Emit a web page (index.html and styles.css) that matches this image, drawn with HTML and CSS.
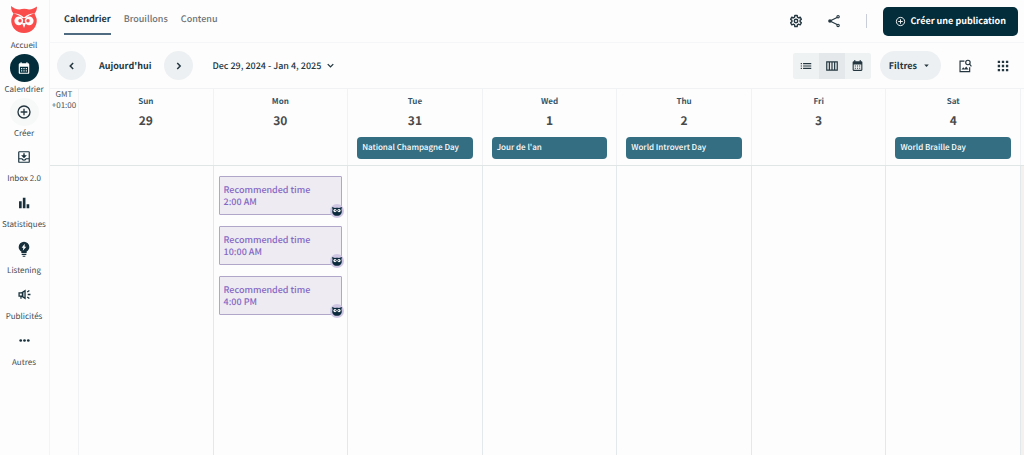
FILE: index.html
```html
<!DOCTYPE html>
<html lang="fr">
<head>
<meta charset="utf-8">
<title>Calendrier</title>
<meta name="viewport" content="width=device-width, initial-scale=1">
<link rel="stylesheet" href="styles.css">
</head>
<body>
<svg class="defs" aria-hidden="true">
  <symbol id="plus-circle" viewBox="0 0 24 24"><circle cx="12" cy="12" r="9" fill="none" stroke="currentColor" stroke-width="2"/><path d="M12 7v10M7 12h10" fill="none" stroke="currentColor" stroke-width="2"/></symbol>
  <symbol id="calendar" viewBox="0 0 24 24"><path fill="currentColor" fill-rule="evenodd" d="M19 4h-1V2h-2v2H8V2H6v2H5a2 2 0 0 0-2 2v14a2 2 0 0 0 2 2h14a2 2 0 0 0 2-2V6a2 2 0 0 0-2-2zM5 10h14v10H5zM7 12v2h2v-2zM11 12v2h2v-2zM15 12v2h2v-2zM7 16v2h2v-2zM11 16v2h2v-2zM15 16v2h2v-2z"/></symbol>
  <symbol id="owl" viewBox="0 0 14 14"><circle cx="7" cy="7" r="7" fill="#cfc6e4"/><path fill="#0b2a3b" d="M2 3 5 4c1.300-.4 2.700-.4 4 0l3-1-.6 2.400c1.300 3.400-.8 6.400-4.400 6.400S1.300 8.800 2.600 5.400z"/><circle cx="5" cy="6.600" r="1.600" fill="#fff"/><circle cx="9" cy="6.600" r="1.600" fill="#fff"/><circle cx="5.300" cy="6.600" r=".6" fill="#0b2a3b"/><circle cx="8.700" cy="6.600" r=".6" fill="#0b2a3b"/></symbol>
</svg>
<div class="app">
  <nav class="sidebar" aria-label="Navigation">
    <a class="home" href="#">
      <svg class="home__logo" viewBox="0 0 28 28" aria-hidden="true"><path fill="#fb4c4c" d="M1 0c2.200 2 5.200 3.300 8.500 3.500 3-1 6.500-1 9.500 0C22 3.300 25 2 27 .5c0 3-.8 5.300-2.500 7 .8 1.800 1.600 3.600 2.200 5.500.8 8-5 14-12.700 14S.5 21 1.300 13c.6-1.900 1.400-3.700 2.200-5.500C1.800 5.500 1 3 1 0z"/><path fill="#fdfdfd" d="M3.500 7.500c3.500-.3 7.500.8 10.500 4 3-3.200 7-4.300 10.500-4-3.600.7-6.500 2.200-8.500 4.500h-4C10 9.700 7.100 8.200 3.500 7.500z"/><circle cx="8.800" cy="14.800" r="4.400" fill="#fdfdfd"/><circle cx="19.200" cy="14.800" r="4.400" fill="#fdfdfd"/><path fill="#fdfdfd" d="M12 17h4l-2 5z"/><circle cx="10" cy="14.800" r="1.700" fill="#fb4c4c"/><circle cx="18" cy="14.800" r="1.700" fill="#fb4c4c"/></svg>
      <span class="nav-label">Accueil</span>
    </a>
    <a class="nav-item nav-item--round" href="#" aria-current="page">
      <span class="nav-icon nav-icon--active"><svg class="icon-14" aria-hidden="true"><use href="#calendar"/></svg></span>
      <span class="nav-label">Calendrier</span>
    </a>
    <a class="nav-item nav-item--round" href="#">
      <span class="nav-icon nav-icon--soft"><svg class="icon-16" aria-hidden="true"><use href="#plus-circle"/></svg></span>
      <span class="nav-label">Créer</span>
    </a>
    <a class="nav-item" href="#">
      <span class="nav-icon"><svg class="icon-14" viewBox="0 0 24 24" aria-hidden="true"><path fill="none" stroke="currentColor" stroke-width="2" d="M4 3h16a1 1 0 0 1 1 1v16a1 1 0 0 1-1 1H4a1 1 0 0 1-1-1V4a1 1 0 0 1 1-1zM3 15h5.500c.8 3 6.200 3 7 0H21"/><path fill="currentColor" d="M10.800 5.500h2.400V9H17l-5 5-5-5h3.800z"/></svg></span>
      <span class="nav-label">Inbox 2.0</span>
    </a>
    <a class="nav-item" href="#">
      <span class="nav-icon"><svg class="icon-14" viewBox="0 0 24 24" aria-hidden="true"><path fill="currentColor" d="M3.500 9H8v12H3.500zM10 3h4.500v18H10zM16.500 14H21v7h-4.500z"/></svg></span>
      <span class="nav-label">Statistiques</span>
    </a>
    <a class="nav-item" href="#">
      <span class="nav-icon"><svg class="icon-16" viewBox="0 0 24 24" aria-hidden="true"><path fill="currentColor" fill-rule="evenodd" d="M12 1a8 8 0 0 0-8 8c0 3 1.500 5.200 4 6.700V18h8v-2.300c2.500-1.500 4-3.700 4-6.700a8 8 0 0 0-8-8zm1 3-4.500 6H11l-.8 4.500L15.500 8.500H13zM8.500 19h7v2h-7zM10 22h4v1.500h-4z"/></svg></span>
      <span class="nav-label">Listening</span>
    </a>
    <a class="nav-item" href="#">
      <span class="nav-icon"><svg class="icon-13" viewBox="0 0 24 24" aria-hidden="true"><path fill="none" stroke="currentColor" stroke-width="2.400" d="M2 9h5l6-4v14l-6-4H2zM5.500 15v5M18 12h5M17 7.500l4-3M17 16.500l4 3"/><path fill="currentColor" d="M7 8h3v8H7z"/></svg></span>
      <span class="nav-label">Publicités</span>
    </a>
    <a class="nav-item" href="#">
      <span class="nav-icon"><svg class="icon-13" viewBox="0 0 24 24" aria-hidden="true"><g fill="currentColor"><circle cx="5" cy="12" r="2.500"/><circle cx="12" cy="12" r="2.500"/><circle cx="19" cy="12" r="2.500"/></g></svg></span>
      <span class="nav-label">Autres</span>
    </a>
  </nav>

  <main class="main">
    <header class="topbar">
      <nav class="tabs" aria-label="Vues">
        <a class="tab tab--active" href="#">Calendrier</a>
        <a class="tab" href="#">Brouillons</a>
        <a class="tab" href="#">Contenu</a>
      </nav>
      <div class="topbar__actions">
        <button class="icon-button" type="button" aria-label="Paramètres"><svg class="icon-14" viewBox="0 0 24 24" aria-hidden="true"><path fill="none" stroke="currentColor" stroke-width="2.400" stroke-linejoin="round" d="M10 2.500h4l.5 2.900 1.900 1.100 2.800-1 2 3.500-2.200 1.900v2.200l2.200 1.900-2 3.500-2.800-1-1.900 1.100-.5 2.900h-4l-.5-2.900-1.900-1.100-2.800 1-2-3.500L5 13.100v-2.200L2.800 9l2-3.500 2.800 1 1.900-1.100z"/><circle cx="12" cy="12" r="3" fill="none" stroke="currentColor" stroke-width="2.400"/></svg></button>
        <button class="icon-button" type="button" aria-label="Partager"><svg class="icon-14" viewBox="0 0 24 24" aria-hidden="true"><path fill="none" stroke="currentColor" stroke-width="2" d="M19 5 5 12l14 7"/><g fill="#fdfdfd" stroke="currentColor" stroke-width="2"><circle cx="19" cy="4.500" r="2"/><circle cx="19" cy="19.500" r="2"/></g><circle cx="5" cy="12" r="3" fill="currentColor"/></svg></button>
        <span class="divider"></span>
        <button class="create" type="button"><svg class="icon-11" aria-hidden="true"><use href="#plus-circle"/></svg>Créer une publication</button>
      </div>
    </header>

    <div class="toolbar">
      <button class="round-button" type="button" aria-label="Semaine précédente"><svg class="icon-14" viewBox="0 0 24 24" aria-hidden="true"><path fill="none" stroke="currentColor" stroke-width="2.600" d="m14 7-5 5 5 5"/></svg></button>
      <button class="today" type="button">Aujourd'hui</button>
      <button class="round-button" type="button" aria-label="Semaine suivante"><svg class="icon-14" viewBox="0 0 24 24" aria-hidden="true"><path fill="none" stroke="currentColor" stroke-width="2.600" d="m9 7 5 5-5 5"/></svg></button>
      <button class="range" type="button">Dec 29, 2024 - Jan 4, 2025<svg class="icon-11" viewBox="0 0 24 24" aria-hidden="true"><path fill="none" stroke="currentColor" stroke-width="3" d="m6 9 6 6 6-6"/></svg></button>
      <div class="toolbar__right">
        <div class="views">
          <button class="view" type="button" aria-label="Liste"><svg class="icon-14" viewBox="0 0 24 24" aria-hidden="true"><path fill="currentColor" d="M3 7h2v2H3zM7 7h14v2H7zM3 11h2v2H3zM7 11h14v2H7zM3 15h2v2H3zM7 15h14v2H7z"/></svg></button>
          <button class="view view--active" type="button" aria-label="Semaine"><svg class="icon-14" viewBox="0 0 24 24" aria-hidden="true"><path fill="none" stroke="currentColor" stroke-width="2" d="M3 5h18v14H3zM7.500 5v14M12 5v14M16.500 5v14"/></svg></button>
          <button class="view" type="button" aria-label="Mois"><svg class="icon-13" aria-hidden="true"><use href="#calendar"/></svg></button>
        </div>
        <button class="filters" type="button">Filtres<svg class="icon-11" viewBox="0 0 24 24" aria-hidden="true"><path fill="currentColor" d="M7 10h10l-5 5z"/></svg></button>
        <div class="tools">
          <button class="icon-button" type="button" aria-label="Recherche d'images"><svg class="icon-14" viewBox="0 0 24 24" aria-hidden="true"><path fill="none" stroke="currentColor" stroke-width="2" d="M11 3.500H3.500v18H20V14"/><circle cx="17" cy="6" r="3.800" fill="none" stroke="currentColor" stroke-width="2"/><path fill="none" stroke="currentColor" stroke-width="2" d="m19.500 8.500 3.500 4"/><path fill="currentColor" d="m6 18 3-4 2.200 2.500L14 13l4 5z"/></svg></button>
          <button class="icon-button" type="button" aria-label="Applications"><svg class="icon-14" viewBox="0 0 24 24" aria-hidden="true"><path fill="currentColor" d="M3 3h4v4H3zM10 3h4v4h-4zM17 3h4v4h-4zM3 10h4v4H3zM10 10h4v4h-4zM17 10h4v4h-4zM3 17h4v4H3zM10 17h4v4h-4zM17 17h4v4h-4z"/></svg></button>
        </div>
      </div>
    </div>

    <section class="calendar" aria-label="Semaine">
      <div class="week week--head">
        <div class="zone">GMT<br>+01:00</div>
        <div class="day"><span class="day__name">Sun</span><span class="day__number">29</span></div>
        <div class="day"><span class="day__name">Mon</span><span class="day__number">30</span></div>
        <div class="day"><span class="day__name">Tue</span><span class="day__number">31</span><a class="event" href="#">National Champagne Day</a></div>
        <div class="day"><span class="day__name">Wed</span><span class="day__number">1</span><a class="event" href="#">Jour de l'an</a></div>
        <div class="day"><span class="day__name">Thu</span><span class="day__number">2</span><a class="event" href="#">World Introvert Day</a></div>
        <div class="day"><span class="day__name">Fri</span><span class="day__number">3</span></div>
        <div class="day"><span class="day__name">Sat</span><span class="day__number">4</span><a class="event" href="#">World Braille Day</a></div>
        <div class="edge"></div>
      </div>
      <div class="week week--body">
        <div class="slot"></div>
        <div class="slot"></div>
        <div class="slot">
          <a class="suggestion" href="#">Recommended time<br>2:00 AM<svg class="suggestion__owl" aria-hidden="true"><use href="#owl"/></svg></a>
          <a class="suggestion" href="#">Recommended time<br>10:00 AM<svg class="suggestion__owl" aria-hidden="true"><use href="#owl"/></svg></a>
          <a class="suggestion" href="#">Recommended time<br>4:00 PM<svg class="suggestion__owl" aria-hidden="true"><use href="#owl"/></svg></a>
        </div>
        <div class="slot"></div>
        <div class="slot"></div>
        <div class="slot"></div>
        <div class="slot"></div>
        <div class="slot"></div>
        <div class="edge edge--track"></div>
      </div>
    </section>
  </main>
</div>
</body>
</html>
```
FILE: styles.css
```css
* { box-sizing: border-box; }

body {
  margin: 0;
  background: #fdfdfd;
  color: #24363f;
  font: 400 8px/12px "Noto Sans CJK SC", "Noto Sans", sans-serif;
  text-rendering: geometricPrecision;
}

a { color: inherit; text-decoration: none; }

button {
  display: flex;
  align-items: center;
  justify-content: center;
  padding: 0;
  border: 0;
  background: none;
  color: inherit;
  font: inherit;
  text-rendering: inherit;
  white-space: nowrap;
  cursor: pointer;
}

svg { display: block; flex: none; }
.defs { position: absolute; width: 0; height: 0; }
.icon-11 { width: 11px; height: 11px; }
.icon-13 { width: 13px; height: 13px; }
.icon-14 { width: 14px; height: 14px; }
.icon-16 { width: 16px; height: 16px; }

.app { display: flex; min-height: 100vh; }

/* Sidebar */
.sidebar {
  flex: 0 0 50px;
  padding: 6px 0 0;
  border-right: 1px solid #f3f4f5;
}
.home, .nav-item {
  display: flex;
  flex-direction: column;
  align-items: center;
  padding-right: 1px;
}
.home { height: 48px; gap: 4px; }
.home__logo { width: 28px; height: 28px; }
.nav-item { height: 46px; }
.nav-item--round { height: 44px; }
.nav-icon {
  display: grid;
  place-items: center;
  width: 29px;
  height: 29px;
  border-radius: 50%;
  color: #17303c;
}
.nav-icon--active { background: #032d3a; color: #fff; }
.nav-icon--soft { background: #f7f8f8; color: #24363f; }
.nav-label { line-height: 16px; color: #3f4a50; white-space: nowrap; }

/* Top bar */
.main { flex: 1; min-width: 0; display: flex; flex-direction: column; }
.topbar {
  display: flex;
  align-items: center;
  justify-content: space-between;
  height: 43px;
  padding: 0 6px 0 14px;
  border-bottom: 1px solid #f5f6f7;
}
.tabs {
  display: flex;
  align-self: flex-start;
  gap: 13px;
  padding-top: 4px;
  font-size: 9px;
  font-weight: 500;
}
.tab {
  height: 31px;
  padding-top: 9px;
  border-bottom: 2px solid transparent;
  color: #6b7276;
}
.tab--active { border-color: #4f6b82; color: #24363f; font-weight: 700; }
.topbar__actions { display: flex; align-items: center; gap: 16px; }
.icon-button { width: 22px; height: 22px; }
.divider { width: 1px; height: 14px; margin-left: 5px; background: #c9cdd8; }
.create {
  gap: 4px;
  height: 29px;
  padding: 0 12px;
  border-radius: 5px;
  background: #032d3a;
  color: #fff;
  font-size: 9px;
  font-weight: 700;
}

/* Toolbar */
.toolbar {
  display: flex;
  align-items: center;
  height: 45px;
  padding: 0 10px 0 7px;
  font-size: 9px;
  font-weight: 700;
}
.round-button { width: 29px; height: 29px; border-radius: 50%; background: #edf0f2; }
.today { padding: 0 13px; }
.range { gap: 4px; margin-left: 19px; font-weight: 500; }
.toolbar__right { display: flex; align-items: center; gap: 9px; margin-left: auto; }
.views { display: flex; border-radius: 2px; background: #eff2f3; }
.view { width: 26px; height: 26px; }
.view--active { background: #e4e8eb; }
.filters {
  gap: 4px;
  height: 29px;
  padding: 0 9px;
  border-radius: 15px;
  background: #edf0f2;
}
.tools { display: flex; gap: 16px; padding-left: 4px; }

/* Calendar */
.calendar { flex: 1; display: flex; flex-direction: column; border-top: 1px solid #f0f2f3; }
.week { display: grid; grid-template-columns: 29px repeat(7, minmax(0, 1fr)) 3px; }
.week--head { min-height: 77px; border-bottom: 1px solid #e0e5e6; }
.week--body { flex: 1; }
.zone { border-right: 1px solid #f0f2f3; text-align: center; line-height: 11px; color: #4c5458; }
.day {
  display: flex;
  flex-direction: column;
  padding: 7px 9px 0;
  border-right: 1px solid #f0f2f3;
}
.day__name, .day__number { text-align: center; font-weight: 700; }
.day__name { color: #335568; }
.day__number { margin-top: 6px; color: #4a4a4a; font-size: 12px; line-height: 14px; }
.event {
  margin-top: 9px;
  padding: 5px;
  border-radius: 4px;
  background: #336e82;
  color: #fff;
  font-weight: 500;
  white-space: nowrap;
}
.slot { padding: 10px 5px 0; border-right: 1px solid #e3e8ea; }
.slot:first-child { border-right: 1px solid #f0f2f3; }
.edge--track { background: #f5f1ef; }
.suggestion {
  position: relative;
  display: block;
  margin-bottom: 11px;
  padding: 7px 4px 6px;
  border: 1px solid #afa6c9;
  border-radius: 1px;
  background: #eeebf2;
  color: #8468c4;
  font-size: 9px;
  font-weight: 500;
}
.suggestion__owl { position: absolute; right: -3px; bottom: -4px; width: 14px; height: 14px; }
```
